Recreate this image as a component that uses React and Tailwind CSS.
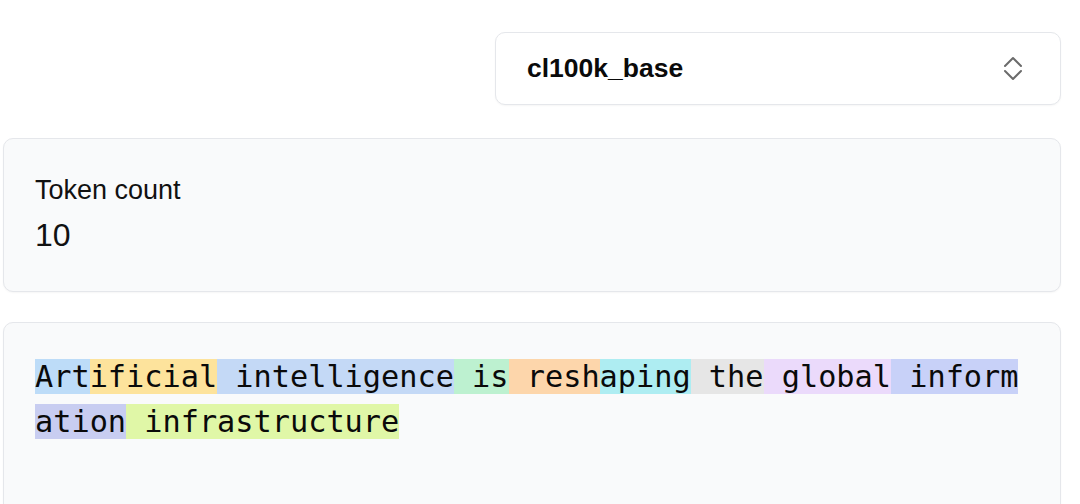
const tokens = [
  { text: 'Art', color: 'bg-[#bddcf8]' },
  { text: 'ificial', color: 'bg-[#fde39c]' },
  { text: ' intelligence', color: 'bg-[#c4d9f6]' },
  { text: ' is', color: 'bg-[#bdf1d0]' },
  { text: ' resh', color: 'bg-[#fdd6ab]' },
  { text: 'aping', color: 'bg-[#aeedf2]' },
  { text: ' the', color: 'bg-[#e6e6e6]' },
  { text: ' global', color: 'bg-[#ebdafb]' },
  { text: ' inform', color: 'bg-[#c8d1f8]' },
  { text: 'ation', color: 'bg-[#c8cdf1]' },
  { text: ' infrastructure', color: 'bg-[#e0f7a7]' },
];

const App = () => {
  return (
    <div className="min-h-[504px] bg-white pl-[3px] pr-[19px] pt-[32px] font-['Liberation_Sans',Arial,sans-serif] text-[#111]">
      {/* Encoder select */}
      <div className="flex justify-end">
        <button className="flex h-[73px] w-[566px] items-center justify-between rounded-[10px] border border-[#e5e7eb] bg-white pl-[31px] pr-[37px] shadow-[0_1px_2px_rgba(0,0,0,0.04)]">
          <span className="text-[26.5px] font-semibold text-[#0a0a0a]">cl100k_base</span>
          <svg width="20" height="25" viewBox="0 0 20 25" fill="none" stroke="#6b6b6b" strokeWidth="2" strokeLinecap="round" strokeLinejoin="round">
            <path d="M2 10 L10 2 L18 10" />
            <path d="M2 15 L10 23 L18 15" />
          </svg>
        </button>
      </div>

      {/* Token count */}
      <div className="mt-[33px] rounded-[10px] border border-[#e5e7eb] bg-[#f9fafb] px-[31px] pb-[36px] pt-[33px] shadow-[0_1px_2px_rgba(0,0,0,0.04)]">
        <div className="text-[27px] leading-[36px]">Token count</div>
        <div className="mt-[7px] text-[32px] leading-[40px]">10</div>
      </div>

      {/* Tokenized text */}
      <div className="mt-[30px] h-[200px] rounded-[10px] border border-[#e5e7eb] bg-[#f9fafb] px-[31px] pt-[31px] shadow-[0_1px_2px_rgba(0,0,0,0.04)]">
        <div className="w-[990px] whitespace-pre-wrap break-all font-['DejaVu_Sans_Mono',monospace] text-[30.25px] leading-[45px] text-[#0a0a0a]">
          {tokens.map((t, i) => (
            <span key={i} className={t.color}>
              {t.text}
            </span>
          ))}
        </div>
      </div>
    </div>
  );
};

export default App;
